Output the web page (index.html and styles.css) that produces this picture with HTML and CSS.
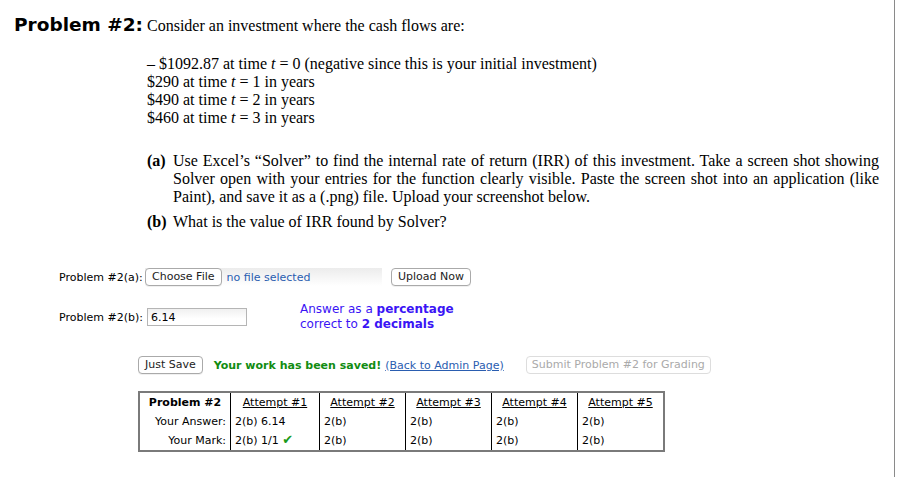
FILE: index.html
```html
<!DOCTYPE html>
<html>
<head>
<meta charset="utf-8">
<link rel="stylesheet" href="styles.css">
</head>
<body>
<div class="page">
  <div class="title-line">
    <span class="title">Problem #2:</span>
    <span class="serif">Consider an investment where the cash flows are:</span>
  </div>
  <div class="flows serif">
    <div>&ndash; $1092.87 at time <i>t</i> = 0 (negative since this is your initial investment)</div>
    <div>$290 at time <i>t</i> = 1 in years</div>
    <div>$490 at time <i>t</i> = 2 in years</div>
    <div>$460 at time <i>t</i> = 3 in years</div>
  </div>
  <div class="parts serif">
    <div class="part">
      <span class="tag">(a)</span>
      <span class="ptext">Use Excel’s “Solver” to find the internal rate of return (IRR) of this investment. Take a screen shot showing Solver open with your entries for the function clearly visible. Paste the screen shot into an application (like Paint), and save it as a (.png) file. Upload your screenshot below.</span>
    </div>
    <div class="part part-b">
      <span class="tag">(b)</span>
      <span class="ptext">What is the value of IRR found by Solver?</span>
    </div>
  </div>

  <div class="row row-a">
    <span class="label">Problem #2(a):</span>
    <span class="file">
      <span class="btn">Choose File</span>
      <span class="nofile">no file selected</span>
    </span>
    <span class="btn upload">Upload Now</span>
  </div>

  <div class="row row-b">
    <span class="label">Problem #2(b):</span>
    <span class="input">6.14</span>
    <span class="hint">Answer as a <b>percentage</b><br>correct to <b>2 decimals</b></span>
  </div>

  <div class="save-row">
    <span class="btn">Just Save</span>
    <span class="saved">Your work has been saved!</span>
    <a class="admin">(Back to Admin Page)</a>
    <span class="btn disabled">Submit Problem #2 for Grading</span>
  </div>

  <table class="attempts">
    <tr>
      <th class="c1">Problem #2</th>
      <td class="h"><u>Attempt #1</u></td>
      <td class="h"><u>Attempt #2</u></td>
      <td class="h"><u>Attempt #3</u></td>
      <td class="h"><u>Attempt #4</u></td>
      <td class="h"><u>Attempt #5</u></td>
    </tr>
    <tr>
      <td class="lab">Your Answer:</td>
      <td>2(b) 6.14</td>
      <td>2(b)</td>
      <td>2(b)</td>
      <td>2(b)</td>
      <td>2(b)</td>
    </tr>
    <tr>
      <td class="lab">Your Mark:</td>
      <td>2(b) 1/1 <span class="check">✔</span></td>
      <td>2(b)</td>
      <td>2(b)</td>
      <td>2(b)</td>
      <td>2(b)</td>
    </tr>
  </table>
</div>
</body>
</html>
```

FILE: styles.css
```css
html, body {
  margin: 0;
  padding: 0;
  background: #fff;
}
body {
  font-family: "DejaVu Sans", Verdana, sans-serif;
  font-size: 11px;
  color: #000;
}
.page {
  width: 895px;
  min-height: 477px;
  border-right: 1px solid #8a8a8a;
  box-sizing: border-box;
  padding: 14px 0 0 14px;
}
.serif {
  font-family: "Liberation Serif", "Times New Roman", serif;
  font-size: 16px;
  line-height: 18px;
}
.title-line {
  display: flex;
  align-items: baseline;
}
.title {
  font-family: "DejaVu Sans", Verdana, sans-serif;
  font-weight: bold;
  font-size: 18.5px;
  width: 133px;
  flex: none;
}
.flows {
  margin: 20px 0 0 133px;
}
.parts {
  margin: 25px 0 0 133px;
  width: 732px;
}
.part {
  display: flex;
}
.part-b {
  margin-top: 7px;
}
.tag {
  font-weight: bold;
  width: 26px;
  flex: none;
}
.ptext {
  text-align: justify;
}
.row {
  display: flex;
  align-items: center;
}
.label {
  width: 131px;
  padding-left: 45px;
  box-sizing: border-box;
  flex: none;
}
.row-a {
  margin-top: 37px;
  height: 18px;
}
.file {
  display: flex;
  align-items: center;
  width: 237px;
  height: 18px;
  background: linear-gradient(#ececec, #fff);
}
.btn {
  display: inline-block;
  border: 1px solid #aaa;
  border-radius: 4px;
  background: #fff;
  padding: 1px 6px;
  line-height: 14px;
  color: #222;
  box-shadow: 0 1px 0 rgba(0,0,0,0.06);
}
.nofile {
  color: #2a5db0;
  margin-left: 5px;
}
.upload {
  margin-left: 9px;
}
.row-b {
  margin-top: 16px;
}
.row-b .label {
  width: 133px;
}
.input {
  width: 100px;
  height: 18px;
  box-sizing: border-box;
  border: 1px solid #b5b5b5;
  background: linear-gradient(#f0f0f0, #fff 60%);
  padding: 2px 3px;
  line-height: 13px;
}
.hint {
  margin-left: 53px;
  color: #3a14f5;
  font-size: 12px;
  line-height: 15px;
}
.save-row {
  display: flex;
  align-items: center;
  margin: 24px 0 0 124px;
}
.saved {
  color: #118c11;
  font-weight: bold;
  margin-left: 11px;
}
.admin {
  color: #2a5db0;
  text-decoration: underline;
  margin-left: 4px;
}
.disabled {
  color: #aaa;
  border-color: #ddd;
  margin-left: 22px;
  padding: 1px 5px;
  box-shadow: none;
}
.attempts {
  margin: 17px 0 0 124px;
  border-collapse: collapse;
  border: 2px solid #7a7a7a;
}
.attempts th, .attempts td {
  border-left: 1px solid #000;
  padding: 2px 4px 2px 4px;
  height: 15px;
  line-height: 15px;
  text-align: left;
  white-space: nowrap;
}
.attempts .c1 {
  border-left: none;
  width: 82px;
  text-align: center;
}
.attempts .lab {
  border-left: none;
  text-align: right;
}
.attempts td.h {
  text-align: center;
}
.attempts td:nth-child(2) { width: 80px; }
.attempts td:nth-child(3) { width: 77px; }
.attempts td:nth-child(4) { width: 77px; }
.attempts td:nth-child(5) { width: 77px; }
.attempts td:nth-child(6) { width: 77px; }
.check {
  color: #1a9a1a;
  font-size: 13px;
  line-height: 13px;
}
```
